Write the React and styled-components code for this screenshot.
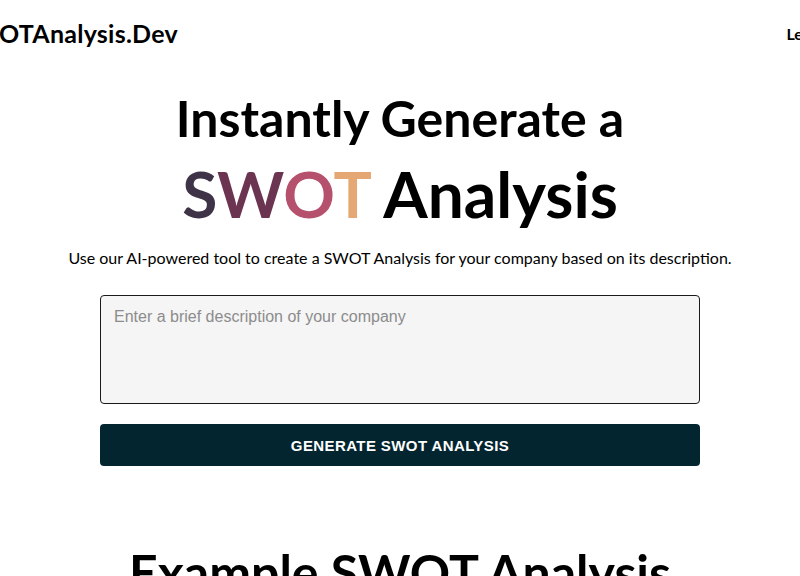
import styled, { createGlobalStyle } from "styled-components";

const GlobalStyle = createGlobalStyle`
	html, body {
		margin: 0;
		padding: 0;
		background: #fff;
		overflow-x: hidden;
	}
	body {
		font-family: Lato, "Noto Sans", sans-serif;
		color: #000;
	}
`;

const Header = styled.header`
	display: flex;
	justify-content: space-between;
	align-items: center;
	margin: 0 -26px 0 -41px;
	padding-top: 18px;
	height: 30px;
`;

const Logo = styled.div`
	font-size: 25px;
	font-weight: 700;
	letter-spacing: 0.25px;
`;

const NavLink = styled.a`
	font-size: 16px;
	font-weight: 700;
	color: #000;
	text-decoration: none;
`;

const Hero = styled.main`
	display: flex;
	flex-direction: column;
	align-items: center;
	padding-top: 42px;
`;

const Title = styled.h1`
	margin: 0;
	font-size: ${(p) => p.size}px;
	line-height: ${(p) => p.lh}px;
	font-weight: 700;
	text-align: center;
`;

const Letter = styled.span`
	color: ${(p) => p.color};
`;

const Desc = styled.p`
	margin: 4px 0 0;
	font-size: 16px;
	font-weight: 400;
	line-height: 24px;
`;

const Form = styled.form`
	display: flex;
	flex-direction: column;
	gap: 20px;
	width: 600px;
	margin-top: 25px;
`;

const TextArea = styled.textarea`
	box-sizing: border-box;
	width: 100%;
	height: 109px;
	padding: 12px 13px;
	border: 1px solid #1a1a1a;
	border-radius: 4px;
	background: #f5f5f5;
	font-family: "Liberation Sans", Arial, sans-serif;
	font-size: 16px;
	resize: none;
	outline: none;
	&::placeholder {
		color: #8c8c8c;
	}
`;

const Button = styled.button`
	height: 42px;
	border: none;
	border-radius: 4px;
	background: #032530;
	color: #fff;
	font-family: "Liberation Sans", Arial, sans-serif;
	font-size: 15px;
	font-weight: 700;
	letter-spacing: 0.4px;
	text-transform: uppercase;
	cursor: pointer;
`;

const SectionTitle = styled.h2`
	margin: 76px 0 0;
	font-size: 50px;
	line-height: 60px;
	font-weight: 700;
	text-align: center;
`;

const swot = [
	["S", "#3f3347"],
	["W", "#6b3552"],
	["O", "#b5506d"],
	["T", "#e5a874"],
];

export default function App() {
	return (
		<>
			<GlobalStyle />
			<Header>
				<Logo>SWOTAnalysis.Dev</Logo>
				<NavLink href="#">Learn</NavLink>
			</Header>
			<Hero>
				<Title size={50} lh={56}>
					Instantly Generate a
				</Title>
				<Title size={64} lh={96}>
					{swot.map(([l, c]) => (
						<Letter key={l} color={c}>
							{l}
						</Letter>
					))}{" "}
					Analysis
				</Title>
				<Desc>
					Use our AI-powered tool to create a SWOT Analysis for your company
					based on its description.
				</Desc>
				<Form onSubmit={(e) => e.preventDefault()}>
					<TextArea placeholder="Enter a brief description of your company" />
					<Button type="submit">Generate SWOT Analysis</Button>
				</Form>
				<SectionTitle>Example SWOT Analysis</SectionTitle>
			</Hero>
		</>
	);
}
